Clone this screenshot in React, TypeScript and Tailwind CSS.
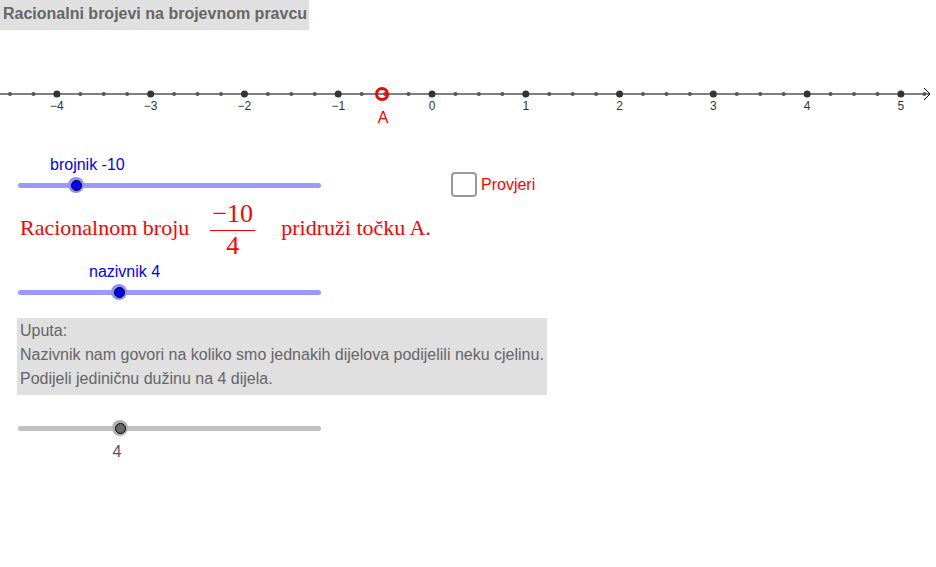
import React from "react";

const U = 93.78;
const X0 = 432;
const px = (v: number) => X0 + U * v;

// quarter ticks from -4.5 to 5.25
const ticks = Array.from({ length: 40 }, (_, i) => -4.5 + i * 0.25);

function NumberLine() {
  return (
    <svg width="936" height="100" className="block">
      <line x1="0" y1="64" x2="930" y2="64" stroke="#000" strokeWidth="1" />
      <polyline points="924,58 930,64 924,70" fill="none" stroke="#000" strokeWidth="1" />
      {ticks.map((v) => {
        const major = Number.isInteger(v);
        return major ? (
          <g key={v}>
            <circle cx={px(v)} cy="64" r="3.5" fill="#333" />
            <text
              x={px(v)}
              y="80"
              textAnchor="middle"
              fontSize="12"
              fill="#333"
              fontFamily="'Liberation Sans', Arial, sans-serif"
            >
              {v < 0 ? `\u2212${-v}` : v}
            </text>
          </g>
        ) : (
          <circle key={v} cx={px(v)} cy="64" r="2" fill="#555" />
        );
      })}
      <circle cx="382" cy="64" r="5.5" fill="none" stroke="#ff0000" strokeWidth="3" />
      <text
        x="383"
        y="93"
        textAnchor="middle"
        fontSize="16"
        fill="#ff0000"
        fontFamily="'Liberation Sans', Arial, sans-serif"
      >
        A
      </text>
    </svg>
  );
}

// Slider track spans page x 18..321; knob class passed in full
function Slider({ knob, track, halo, fill }: { knob: string; track: string; halo: string; fill: string }) {
  return (
    <div className="relative h-[16px] w-[322px]">
      <div className={`absolute left-[18px] top-[5.5px] h-[5px] w-[303px] rounded-full ${track}`} />
      <div className={`absolute top-0 flex h-[16px] w-[16px] items-center justify-center rounded-full ${halo} ${knob}`}>
        <div className={`h-[11px] w-[11px] rounded-full border border-black ${fill}`} />
      </div>
    </div>
  );
}

export default function App() {
  return (
    <div className="h-[567px] w-[936px] overflow-hidden bg-white font-['Liberation_Sans',Arial,sans-serif]">
      <div className="h-[30px] w-[309px] bg-[#e0e0e0] pl-[3px] text-[16px] font-bold leading-[28px] text-[#666]">
        Racionalni brojevi na brojevnom pravcu
      </div>

      <NumberLine />

      <div className="flex">
        <div className="w-[451px]">
          <div className="mt-[26px] pl-[50px] text-[16px] leading-[17px] text-[#0000ff]">brojnik -10</div>
          <div className="mt-[4px]">
            <Slider knob="left-[68px]" track="bg-[#9999ff]" halo="bg-[#8f8fff]" fill="bg-[#0000ff]" />
          </div>
        </div>
        <div className="mt-[42px] flex items-center gap-[4px]">
          <div className="h-[25px] w-[26px] rounded-[4px] border-2 border-[#999] bg-white" />
          <span className="text-[16px] leading-[20px] text-[#ff0000]">Provjeri</span>
        </div>
      </div>

      <div className="flex items-start pl-[20px] font-['Liberation_Serif','Times_New_Roman',serif] text-[#ff0000]">
        <span className="mt-[19px] text-[22px] leading-[24px]">Racionalnom broju</span>
        <div className="ml-[21px] mt-[3px] flex w-[45px] flex-col items-center">
          <span className="text-[26px] leading-[28px]">{"\u221210"}</span>
          <div className="mt-[2px] h-[1px] w-full bg-[#ff0000]" />
          <span className="mt-[1px] text-[26px] leading-[28px]">4</span>
        </div>
        <span className="ml-[26px] mt-[19px] text-[22px] leading-[24px]">pridruži točku A.</span>
      </div>

      <div className="mt-[3px] pl-[89px] text-[16px] leading-[17px] text-[#0000ff]">nazivnik 4</div>
      <div className="mt-[4px]">
        <Slider knob="left-[111px]" track="bg-[#9999ff]" halo="bg-[#8f8fff]" fill="bg-[#0000ff]" />
      </div>

      <div className="ml-[17px] mt-[18px] h-[77px] w-[530px] bg-[#e0e0e0] pl-[3px] pt-[1px] text-[16px] leading-[24px] text-[#666]">
        <div>Uputa:</div>
        <div>Nazivnik nam govori na koliko smo jednakih dijelova podijelili neku cjelinu.</div>
        <div>Podijeli jediničnu dužinu na 4 dijela.</div>
      </div>

      <div className="mt-[25px]">
        <Slider knob="left-[112px]" track="bg-[#c0c0c0]" halo="bg-[#b0b0b0]" fill="bg-[#666]" />
      </div>
      <div className="mt-[7px] w-[234px] text-center text-[16px] leading-[17px] text-[#555]">4</div>
    </div>
  );
}
